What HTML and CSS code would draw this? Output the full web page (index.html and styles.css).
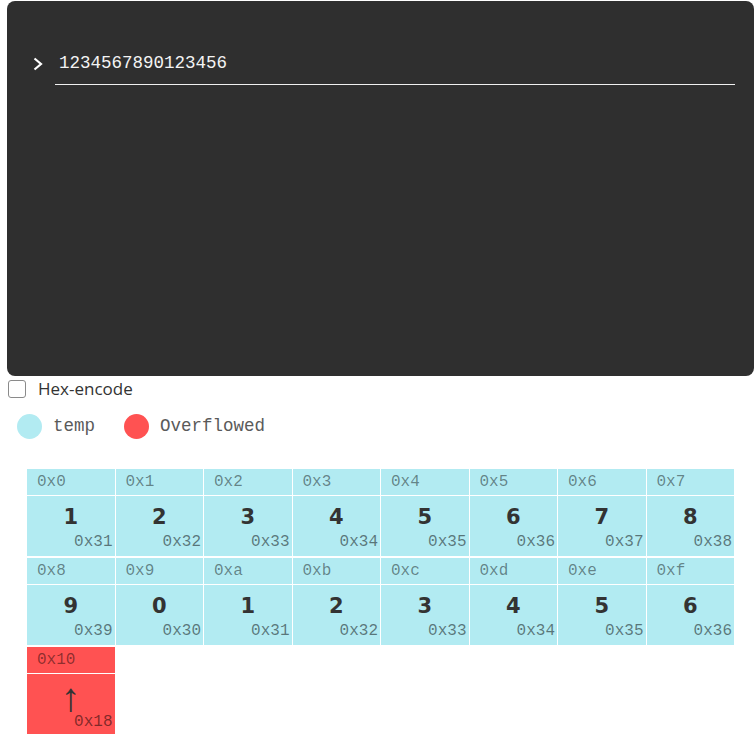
FILE: index.html
```html
<!DOCTYPE html>
<html>
<head>
<meta charset="utf-8">
<link rel="stylesheet" href="styles.css">
</head>
<body>
<div class="terminal">
  <div class="prompt-row">
    <svg class="chevron" width="12" height="14" viewBox="0 0 12 14"><path d="M2.5 1.5 L9 7 L2.5 12.5" fill="none" stroke="#fff" stroke-width="2.2"/></svg>
    <div class="input-wrap"><span class="input-text">1234567890123456</span></div>
  </div>
</div>
<label class="check-row"><span class="checkbox"></span><span class="check-label">Hex-encode</span></label>
<div class="legend">
  <span class="dot dot-temp"></span><span class="legend-text">temp</span>
  <span class="dot dot-over"></span><span class="legend-text">Overflowed</span>
</div>
<div class="grid">
  <div class="cell"><div class="addr">0x0</div><div class="val"><span class="ch">1</span><span class="hex">0x31</span></div></div>
  <div class="cell"><div class="addr">0x1</div><div class="val"><span class="ch">2</span><span class="hex">0x32</span></div></div>
  <div class="cell"><div class="addr">0x2</div><div class="val"><span class="ch">3</span><span class="hex">0x33</span></div></div>
  <div class="cell"><div class="addr">0x3</div><div class="val"><span class="ch">4</span><span class="hex">0x34</span></div></div>
  <div class="cell"><div class="addr">0x4</div><div class="val"><span class="ch">5</span><span class="hex">0x35</span></div></div>
  <div class="cell"><div class="addr">0x5</div><div class="val"><span class="ch">6</span><span class="hex">0x36</span></div></div>
  <div class="cell"><div class="addr">0x6</div><div class="val"><span class="ch">7</span><span class="hex">0x37</span></div></div>
  <div class="cell"><div class="addr">0x7</div><div class="val"><span class="ch">8</span><span class="hex">0x38</span></div></div>
  <div class="cell"><div class="addr">0x8</div><div class="val"><span class="ch">9</span><span class="hex">0x39</span></div></div>
  <div class="cell"><div class="addr">0x9</div><div class="val"><span class="ch">0</span><span class="hex">0x30</span></div></div>
  <div class="cell"><div class="addr">0xa</div><div class="val"><span class="ch">1</span><span class="hex">0x31</span></div></div>
  <div class="cell"><div class="addr">0xb</div><div class="val"><span class="ch">2</span><span class="hex">0x32</span></div></div>
  <div class="cell"><div class="addr">0xc</div><div class="val"><span class="ch">3</span><span class="hex">0x33</span></div></div>
  <div class="cell"><div class="addr">0xd</div><div class="val"><span class="ch">4</span><span class="hex">0x34</span></div></div>
  <div class="cell"><div class="addr">0xe</div><div class="val"><span class="ch">5</span><span class="hex">0x35</span></div></div>
  <div class="cell"><div class="addr">0xf</div><div class="val"><span class="ch">6</span><span class="hex">0x36</span></div></div>
  <div class="cell over"><div class="addr">0x10</div><div class="val"><span class="ch arrow">↑</span><span class="hex">0x18</span></div></div>
</div>
</body>
</html>
```

FILE: styles.css
```css
html, body {
  margin: 0;
  padding: 0;
  background: #fff;
}
body {
  padding: 1px 1px 0 7px;
  font-family: "Open Sans", "Liberation Sans", sans-serif;
  overflow: hidden;
}
.terminal {
  width: 747px;
  height: 375px;
  background: #2f2f2f;
  border-radius: 8px;
  box-sizing: border-box;
  padding: 49px 19px 0 25px;
}
.prompt-row {
  display: flex;
  align-items: flex-start;
}
.chevron {
  display: block;
  margin-top: 7px;
  width: 12px;
  height: 14px;
}
.input-wrap {
  margin-left: 11px;
  flex: 1;
  border-bottom: 1px solid #f0f0f0;
  padding: 0 0 9px 4px;
  height: 25px;
}
.input-text {
  font-family: "Liberation Mono", monospace;
  font-size: 17.5px;
  line-height: 26px;
  color: #f4f4f4;
}
.check-row {
  display: flex;
  align-items: center;
  margin-top: 3px;
  margin-left: 1px;
  height: 20px;
}
.checkbox {
  width: 16px;
  height: 16px;
  border: 1px solid #8a8a8a;
  border-radius: 3px;
  background: #fff;
}
.check-label {
  margin-left: 12px;
  font-size: 17px;
  color: #333;
  line-height: 20px;
}
.legend {
  display: flex;
  align-items: center;
  margin-top: 14px;
  margin-left: 10px;
  height: 26px;
}
.dot {
  width: 25px;
  height: 25px;
  border-radius: 50%;
}
.dot-temp { background: #b2ebf2; }
.dot-over { background: #ff5252; margin-left: 29px; }
.legend-text {
  margin-left: 11px;
  font-family: "Liberation Mono", monospace;
  font-size: 17.5px;
  color: #5a5a5a;
}
.grid {
  margin-top: 30px;
  margin-left: 20px;
  width: 707px;
  display: grid;
  grid-template-columns: repeat(8, 1fr);
  column-gap: 1px;
  row-gap: 2px;
}
.cell {
  background: #b2ebf2;
  height: 87px;
  display: flex;
  flex-direction: column;
}
.cell.over {
  background: #ff5252;
}
.addr {
  height: 26px;
  border-bottom: 1px solid #fff;
  box-sizing: content-box;
  padding-left: 10px;
  font-family: "Liberation Mono", monospace;
  font-size: 16px;
  line-height: 26px;
  color: rgba(0, 0, 0, 0.45);
}
.val {
  flex: 1;
  display: flex;
  flex-direction: column;
  align-items: center;
  padding-top: 7px;
}
.ch {
  font-family: "DejaVu Sans", sans-serif;
  font-weight: bold;
  font-size: 21px;
  line-height: 28px;
  height: 28px;
  color: #333;
}
.ch.arrow {
  font-family: "Liberation Sans", sans-serif;
  font-weight: normal;
  font-size: 40px;
  line-height: 32px;
  height: 32px;
}
.cell.over .hex {
  margin-top: 0;
}
.hex {
  align-self: flex-end;
  margin-top: 2px;
  padding-right: 2px;
  font-family: "Liberation Mono", monospace;
  font-size: 16px;
  line-height: 18px;
  color: rgba(0, 0, 0, 0.5);
}
```
